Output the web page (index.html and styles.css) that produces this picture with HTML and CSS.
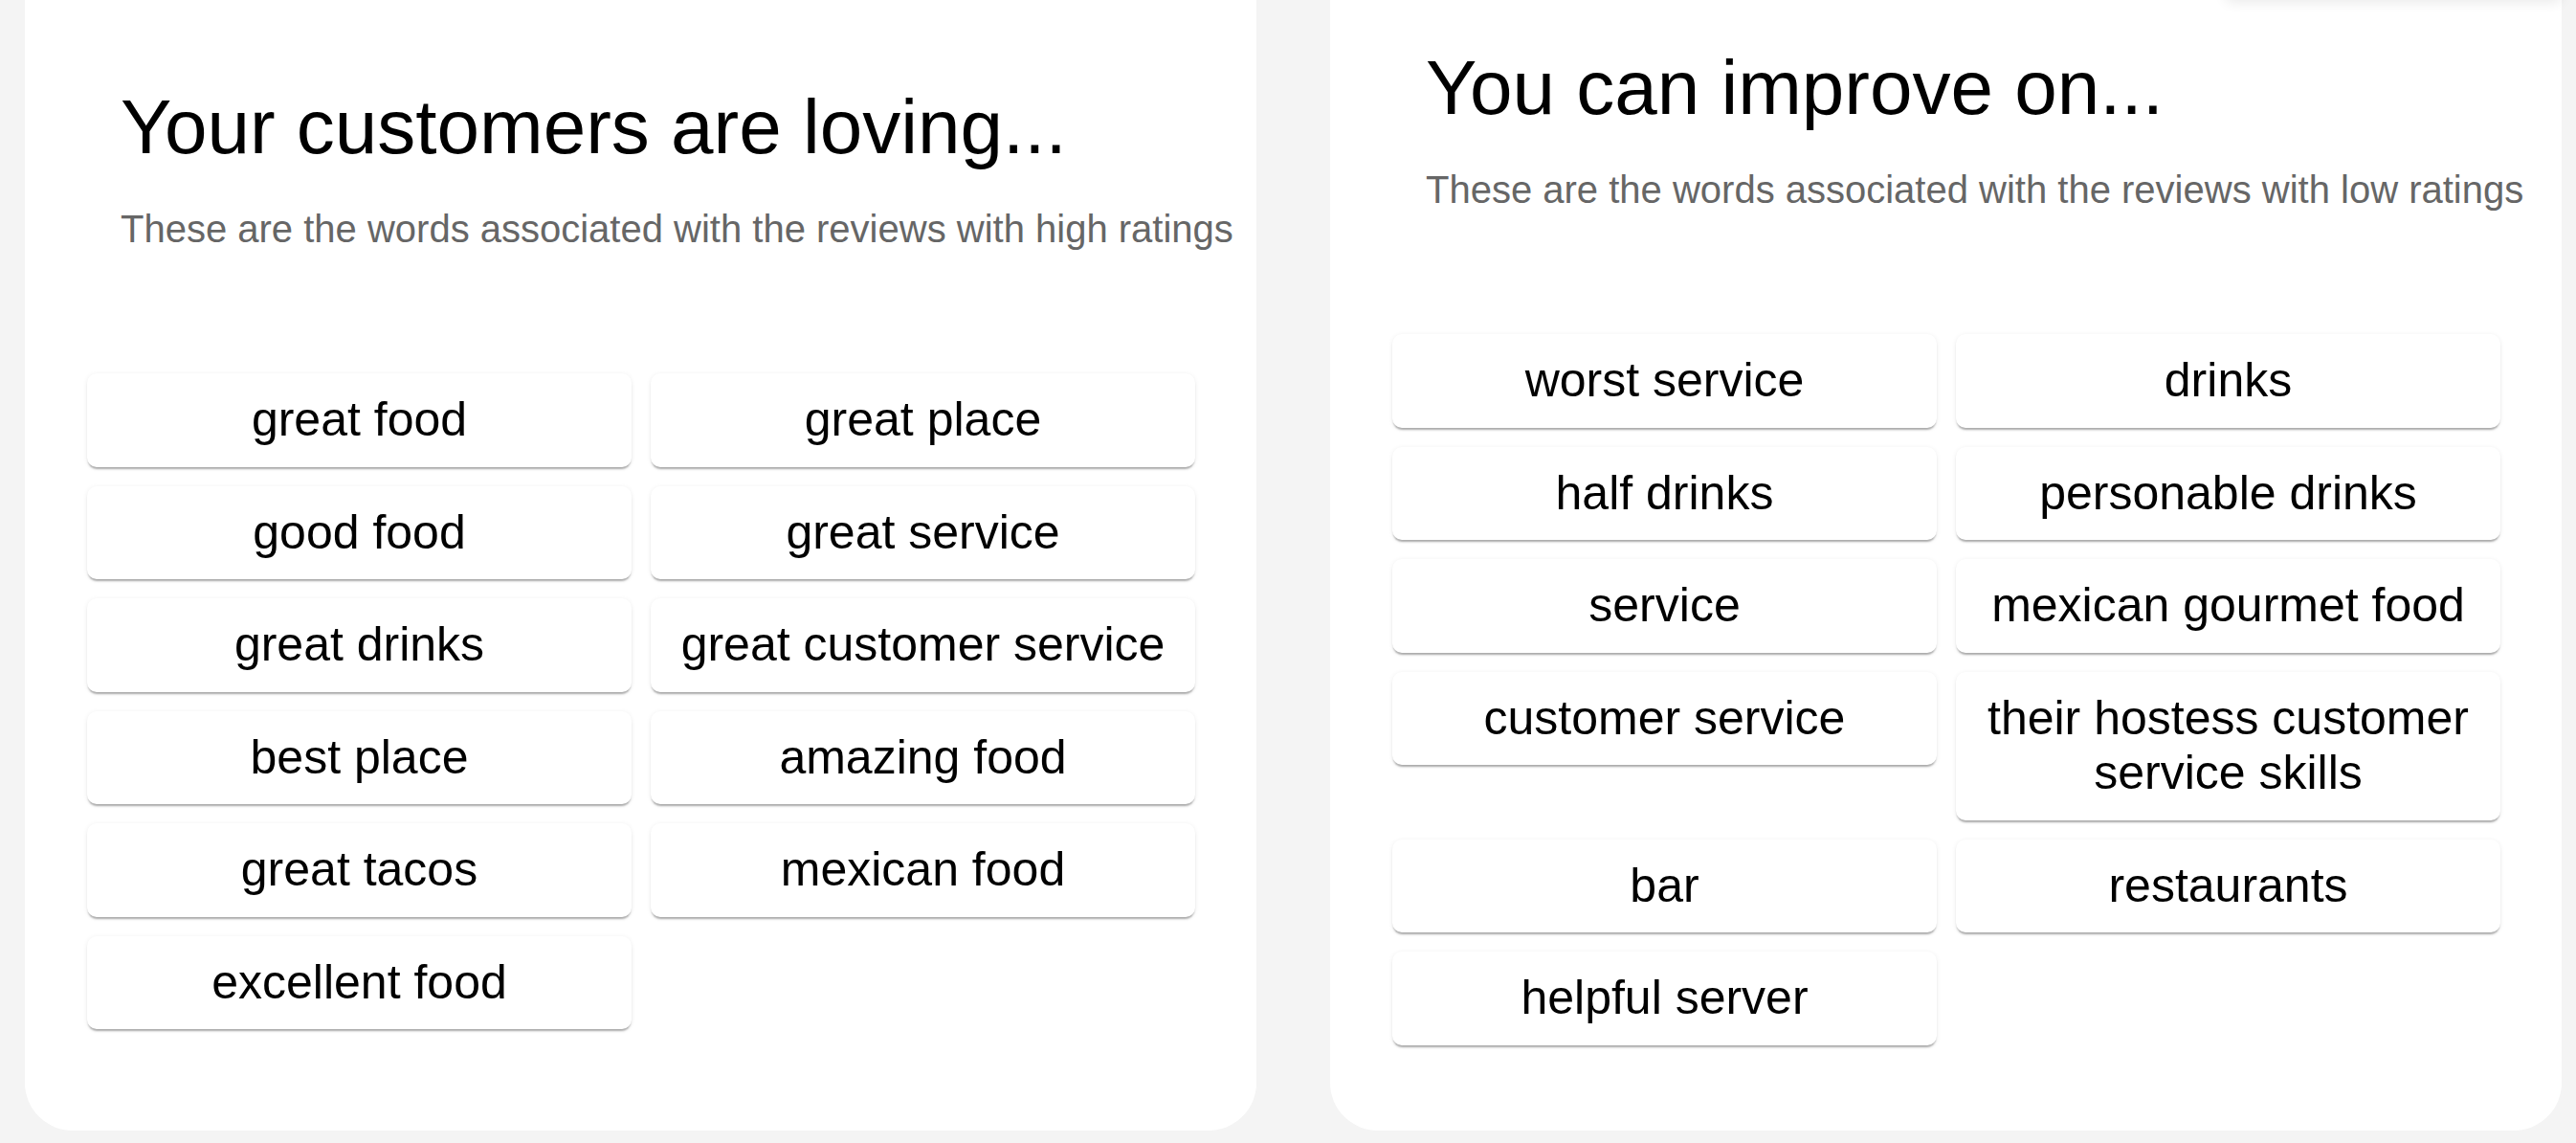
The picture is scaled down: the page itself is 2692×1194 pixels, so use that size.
FILE: index.html
```html
<!DOCTYPE html>
<html lang="en">
<head>
<meta charset="utf-8">
<title>Review keywords</title>
<link rel="stylesheet" href="styles.css">
</head>
<body>
<main class="board">
  <section class="card card-good">
    <h2 class="card-title">Your customers are loving...</h2>
    <p class="card-sub">These are the words associated with the reviews with high ratings</p>
    <div class="chips">
      <div class="chip">great food</div>
      <div class="chip">great place</div>
      <div class="chip">good food</div>
      <div class="chip">great service</div>
      <div class="chip">great drinks</div>
      <div class="chip">great customer service</div>
      <div class="chip">best place</div>
      <div class="chip">amazing food</div>
      <div class="chip">great tacos</div>
      <div class="chip">mexican food</div>
      <div class="chip">excellent food</div>
    </div>
  </section>
  <section class="card card-bad">
    <div class="card-menu"></div>
    <h2 class="card-title">You can improve on...</h2>
    <p class="card-sub">These are the words associated with the reviews with low ratings</p>
    <div class="chips">
      <div class="chip">worst service</div>
      <div class="chip">drinks</div>
      <div class="chip">half drinks</div>
      <div class="chip">personable drinks</div>
      <div class="chip">service</div>
      <div class="chip">mexican gourmet food</div>
      <div class="chip">customer service</div>
      <div class="chip">their hostess customer service skills</div>
      <div class="chip">bar</div>
      <div class="chip">restaurants</div>
      <div class="chip">helpful server</div>
    </div>
  </section>
</main>
</body>
</html>
```

FILE: styles.css
```css
html, body {
  margin: 0;
  padding: 0;
}

body {
  background: #f4f4f4;
  font-family: "Liberation Sans", Arial, sans-serif;
  color: #000;
  overflow: hidden;
}

.board {
  display: grid;
  grid-template-columns: 1287px 1287px;
  column-gap: 77px;
  align-items: stretch;
  margin-top: -50px;
  padding: 0 15px 11px 26px;
}

.card {
  position: relative;
  background: #fff;
  border-radius: 50px;
  padding: 0 64px 89px 65px;
  display: flex;
  flex-direction: column;
  align-items: stretch;
}

.card-good {
  padding-top: 137px;
}

.card-bad {
  padding-top: 96px;
}

.card-title {
  margin: 0 0 0 35px;
  font-size: 80px;
  font-weight: 400;
  line-height: 92px;
  white-space: nowrap;
}

.card-sub {
  margin: 37px -60px 0 35px;
  font-size: 40px;
  line-height: 46px;
  color: #666;
  white-space: nowrap;
}

.chips {
  margin-top: 128px;
  display: grid;
  grid-template-columns: 1fr 1fr;
  gap: 20px;
  align-items: start;
}

.chip {
  background: #fff;
  border-radius: 10px;
  padding: 20px 16px;
  text-align: center;
  font-size: 50px;
  line-height: 57.5px;
  box-shadow: 0 3px 2px -1px rgba(0, 0, 0, 0.3), 0 1px 5px rgba(0, 0, 0, 0.08);
}

.card-menu {
  position: absolute;
  top: -40px;
  right: 0;
  width: 351px;
  height: 88px;
  background: #fff;
  border-radius: 6px;
  box-shadow: 0 4px 14px rgba(0, 0, 0, 0.09);
}
```
